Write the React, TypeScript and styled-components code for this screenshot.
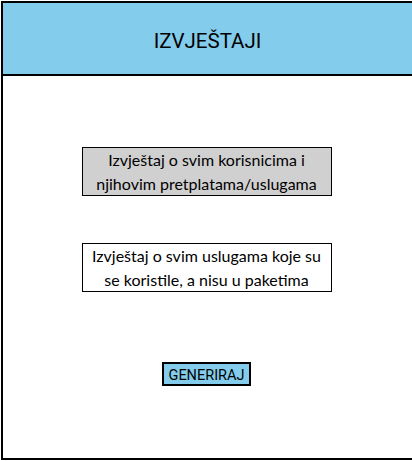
import React from "react";
import styled, { createGlobalStyle } from "styled-components";

const Global = createGlobalStyle`
  html, body { margin: 0; padding: 0; background: #fff; }
  body { width: 412px; height: 461px; overflow: hidden; }
`;

const Frame = styled.div`
  box-sizing: border-box;
  margin: 1px 0 0 1px;
  width: 411px;
  height: 459px;
  border: 2px solid #000;
  border-right: none;
  display: flex;
  flex-direction: column;
`;

const Header = styled.header`
  box-sizing: border-box;
  height: 73px;
  background: #83cceb;
  border-bottom: 2px solid #000;
  display: flex;
  align-items: center;
  justify-content: center;
  padding: 5px 0 0 0;
`;

const Title = styled.h1`
  margin: 0;
  font-family: Roboto, "Liberation Sans", sans-serif;
  font-weight: 400;
  font-size: 20.5px;
  color: #000;
`;

const Body = styled.main`
  flex: 1;
  display: flex;
  flex-direction: column;
  align-items: center;
  padding-top: 71px;
  padding-right: 2px;
`;

const ReportBox = styled.div<{ $selected?: boolean }>`
  box-sizing: border-box;
  width: 250px;
  height: 49px;
  border: 1px solid #000;
  background: ${(p) => (p.$selected ? "#d0d0d0" : "#fff")};
  font-family: Lato, "Open Sans", sans-serif;
  font-size: 16px;
  line-height: 24px;
  text-align: center;
  color: #000;
  display: flex;
  align-items: center;
  justify-content: center;
  margin-bottom: ${(p) => (p.$selected ? "47px" : "70px")};
`;

const Button = styled.button`
  box-sizing: border-box;
  width: 89px;
  height: 24px;
  padding: 2px 0 0;
  border: 2px solid #000;
  background: #83cceb;
  font-family: Roboto, "Liberation Sans", sans-serif;
  font-size: 14.5px;
  color: #000;
  display: flex;
  align-items: center;
  justify-content: center;
`;

export default function App() {
  return (
    <>
      <Global />
      <Frame>
        <Header>
          <Title>IZVJEŠTAJI</Title>
        </Header>
        <Body>
          <ReportBox $selected>
            Izvještaj o svim korisnicima i
            <br />
            njihovim pretplatama/uslugama
          </ReportBox>
          <ReportBox>
            Izvještaj o svim uslugama koje su
            <br />
            se koristile, a nisu u paketima
          </ReportBox>
          <Button>GENERIRAJ</Button>
        </Body>
      </Frame>
    </>
  );
}
